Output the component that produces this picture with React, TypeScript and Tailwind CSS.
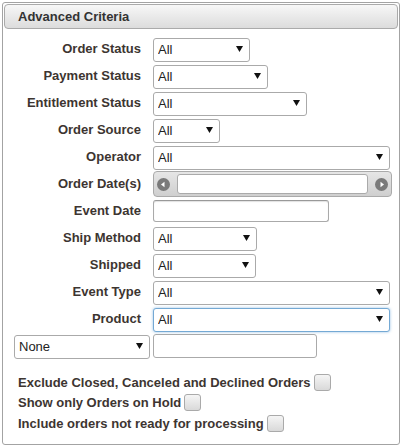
import { ReactNode } from "react";

const font = { fontFamily: '"Liberation Sans", Arial, sans-serif' };

function Arrow() {
  return (
    <svg
      className="pointer-events-none absolute right-[7px] top-1/2 -translate-y-1/2"
      width="7"
      height="6"
      viewBox="0 0 7 6"
    >
      <path d="M0 0 H7 L3.5 6 Z" fill="#111" />
    </svg>
  );
}

function Select({ width, value = "All", focus = false }: { width: string; value?: string; focus?: boolean }) {
  return (
    <div className={`relative h-[24px] ${width}`}>
      <select
        defaultValue={value}
        className={`h-full w-full appearance-none rounded-[3px] border bg-white pl-[4px] text-[13px] text-[#222] outline-none ${
          focus ? "border-[#74a9d4] shadow-[0_0_3px_rgba(80,150,210,0.6)]" : "border-[#aaa]"
        }`}
      >
        <option>{value}</option>
      </select>
      <Arrow />
    </div>
  );
}

function TextInput({ width }: { width: string }) {
  return (
    <input
      type="text"
      className={`h-[22px] ${width} rounded-[3px] border border-[#aaa] border-t-[#999] bg-white shadow-[inset_0_1px_1px_rgba(0,0,0,0.12)] outline-none`}
    />
  );
}

function Circle({ dir }: { dir: "l" | "r" }) {
  return (
    <svg className="shrink-0" width="13" height="13" viewBox="0 0 13 13">
      <circle cx="6.5" cy="6.5" r="6.5" fill="#7a7a7a" />
      {dir === "l" ? (
        <path d="M4 6.5 L7.5 3.8 V9.2 Z" fill="#fff" />
      ) : (
        <path d="M9 6.5 L5.5 3.8 V9.2 Z" fill="#fff" />
      )}
    </svg>
  );
}

function Row({ label, children }: { label: string; children: ReactNode }) {
  return (
    <div className="mb-[3px] flex h-[24px] items-center">
      <div className="w-[149px] shrink-0 pr-[12px] text-right text-[13px] font-bold text-[#3d3531]">{label}</div>
      {children}
    </div>
  );
}

function Check({ label }: { label: string }) {
  return (
    <div className="flex h-[20.5px] items-center text-[13px] font-bold text-[#3d3531]">
      <span>{label}</span>
      <span className="ml-[3px] inline-block h-[17px] w-[17px] rounded-[3px] border border-[#aaa] bg-gradient-to-b from-[#f5f5f5] to-[#d9d9d9]" />
    </div>
  );
}

export default function App() {
  return (
    <div className="p-[2px]" style={font}>
      <div className="h-[443px] w-[398px] rounded-[3px] border border-[#a3a3a3] bg-white p-[1px]">
        <div className="flex h-[25px] items-center rounded-[4px] border border-[#aaa] bg-gradient-to-b from-[#f7f7f7] to-[#dcdcdc] pl-[13px] text-[13px] font-bold text-[#333]">
          Advanced Criteria
        </div>

        <div className="mt-[8px]">
          <Row label="Order Status">
            <Select width="w-[97px]" />
          </Row>
          <Row label="Payment Status">
            <Select width="w-[115px]" />
          </Row>
          <Row label="Entitlement Status">
            <Select width="w-[154px]" />
          </Row>
          <Row label="Order Source">
            <Select width="w-[67px]" />
          </Row>
          <Row label="Operator">
            <Select width="w-[237px]" />
          </Row>
          <Row label="Order Date(s)">
            <div className="flex h-[26px] w-[239px] items-center rounded-[4px] border border-[#aaa] bg-gradient-to-b from-[#e6e6e6] to-[#cfcfcf] px-[3px]">
              <Circle dir="l" />
              <input
                type="text"
                className="mx-[7px] h-[20px] min-w-0 flex-1 rounded-[3px] border border-[#aaa] bg-white outline-none"
              />
              <Circle dir="r" />
            </div>
          </Row>
          <Row label="Event Date">
            <TextInput width="w-[176px]" />
          </Row>
          <Row label="Ship Method">
            <Select width="w-[104px]" />
          </Row>
          <Row label="Shipped">
            <Select width="w-[103px]" />
          </Row>
          <Row label="Event Type">
            <Select width="w-[237px]" />
          </Row>
          <Row label="Product">
            <Select width="w-[237px]" focus />
          </Row>
          <div className="mb-[3px] flex h-[24px] items-center">
            <div className="w-[149px] shrink-0 pl-[10px]">
              <Select width="w-[136px]" value="None" />
            </div>
            <input
              type="text"
              className="h-[24px] w-[164px] rounded-[3px] border border-[#aaa] bg-white outline-none"
            />
          </div>
        </div>

        <div className="mt-[14px] pl-[14px]">
          <Check label="Exclude Closed, Canceled and Declined Orders" />
          <Check label="Show only Orders on Hold" />
          <Check label="Include orders not ready for processing" />
        </div>
      </div>
    </div>
  );
}
